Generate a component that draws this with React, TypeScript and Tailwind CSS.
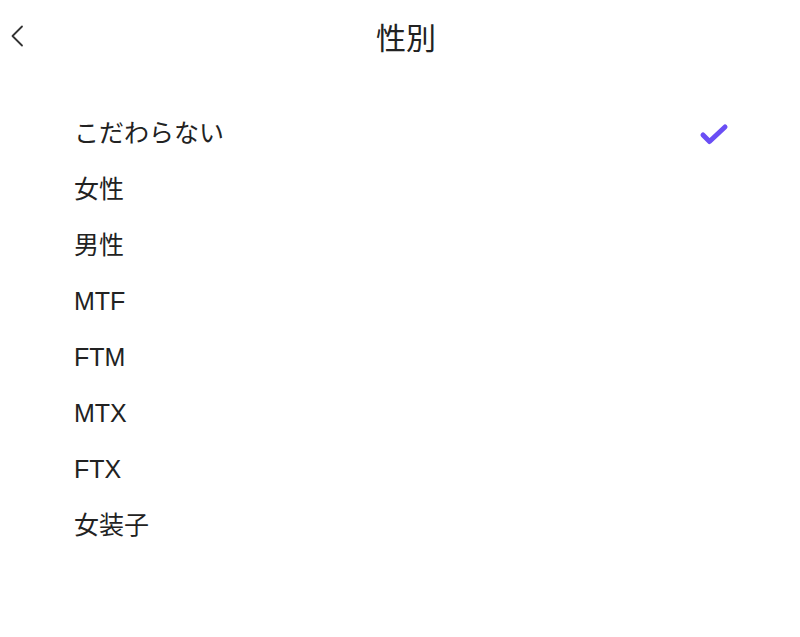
const OPTIONS = ["こだわらない", "女性", "男性", "MTF", "FTM", "MTX", "FTX", "女装子"]

const font = { fontFamily: '"Liberation Sans", "Noto Sans CJK JP", sans-serif' }

function Back() {
  return (
    <svg width="24" height="28" viewBox="0 0 24 28" fill="none">
      <path d="M17 4.5L7.5 14l9.5 9.5" stroke="#333" strokeWidth="1.8" strokeLinecap="round" strokeLinejoin="round" />
    </svg>
  )
}

function Check() {
  return (
    <svg width="32" height="24" viewBox="0 0 32 24" fill="none">
      <path d="M5 13l6.5 6.5L27 5" stroke="#6a4ef5" strokeWidth="5" strokeLinecap="round" strokeLinejoin="round" />
    </svg>
  )
}

export default function App() {
  const selected = 0
  return (
    <div className="min-h-screen bg-white text-[#222]" style={font}>
      <header className="relative h-[76px] flex items-center justify-center">
        <button className="absolute left-[5px] top-[22px]">
          <Back />
        </button>
        <h1 className="text-[30px] pl-3 font-normal">性別</h1>
      </header>
      <ul className="pt-[30px] pl-[74px] pr-[70px]">
        {OPTIONS.map((o, i) => (
          <li key={o} className="h-14 flex items-center justify-between text-[25px]">
            <span>{o}</span>
            {i === selected && <Check />}
          </li>
        ))}
      </ul>
    </div>
  )
}
